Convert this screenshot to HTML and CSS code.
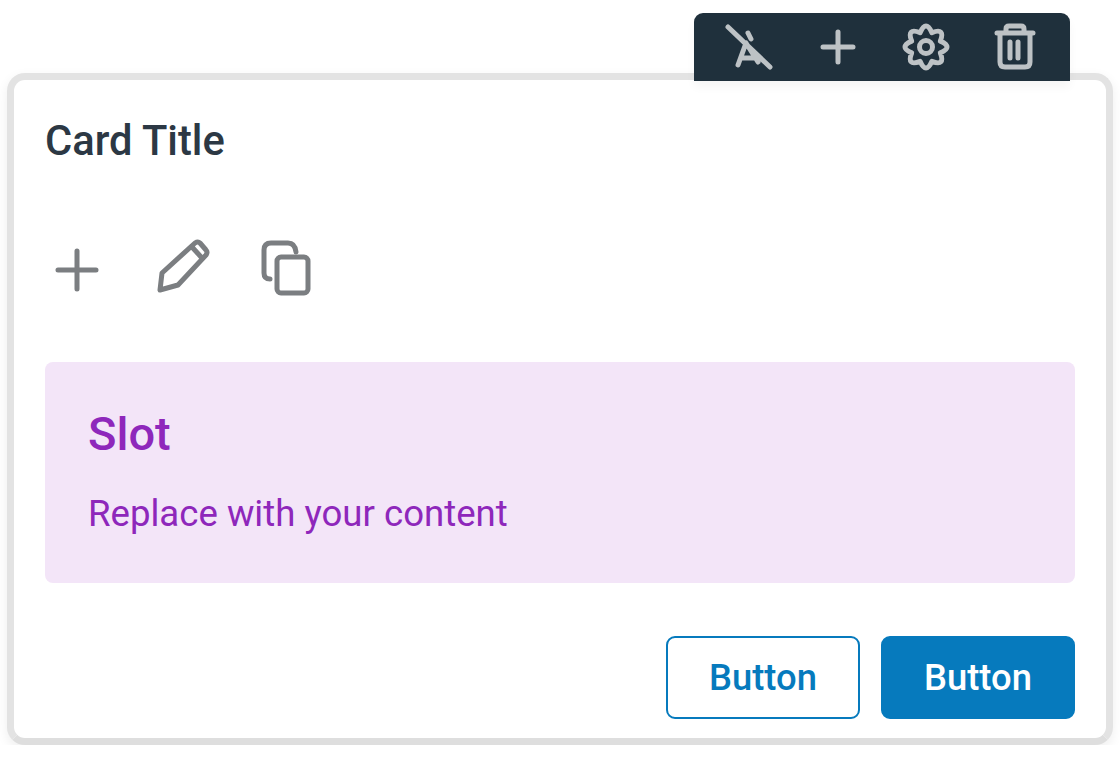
FILE: index.html
```html
<!DOCTYPE html>
<html lang="en">
<head>
  <meta charset="UTF-8">
  <title>Card</title>
  <link rel="stylesheet" href="styles.css">
</head>
<body>
  <div class="card">
    <div class="toolbar">
      <svg class="tool-icon" viewBox="0 0 48 48"><path d="M3 4 45 44M23 10l3 6M21 20 13 42M21 20l12 19M16 35h15"/></svg>
      <svg class="tool-icon" viewBox="0 0 48 48"><path d="M24 9v30M9 24h30"/></svg>
      <svg class="tool-icon" viewBox="0 0 48 48"><circle cx="24" cy="24" r="6.5"/><path d="M38.3 18.1Q51.7 24 38.3 29.9Q43.6 43.6 29.9 38.3Q24 51.7 18.1 38.3Q4.4 43.6 9.7 29.9Q-3.7 24 9.7 18.1Q4.4 4.4 18.1 9.7Q24 -3.7 29.9 9.7Q43.6 4.4 38.3 18.1z"/></svg>
      <svg class="tool-icon" viewBox="0 0 48 48"><path d="M6 10h36M15 9V6q0-3 3-3h12q3 0 3 3v3M9 11v28q0 5 5 5h20q5 0 5-5V11M19 19v16M27 19v16"/></svg>
    </div>
    <h2 class="card-title">Card Title</h2>
    <div class="card-icons">
      <svg class="card-icon" viewBox="0 0 60 60"><path d="M11 32h38M30 13v38"/></svg>
      <svg class="card-icon" viewBox="0 0 60 60"><path d="M9 52l2-17L44 5q3-2 5 0l6 7q2 2 0 5L27 47zM41 9l10 11"/></svg>
      <svg class="card-icon" viewBox="0 0 60 60"><path d="M15 41q-6 0-6-6V12q0-7 7-7h17q7 0 8 9"/><rect x="22" y="19" width="31" height="36" rx="4"/></svg>
    </div>
    <div class="slot">
      <div class="slot-title">Slot</div>
      <div class="slot-text">Replace with your content</div>
    </div>
    <div class="card-actions">
      <button class="btn btn-outline">Button</button>
      <button class="btn btn-primary">Button</button>
    </div>
  </div>
</body>
</html>
```

FILE: styles.css
```css
body {
  font-family: Roboto, "Liberation Sans", sans-serif;
  background-color: #fff;
  margin: 0;
  padding: 73px 7px 0;
}

.card {
  position: relative;
  height: 672px;
  box-sizing: border-box;
  padding: 36px 31px 0;
  background-color: #fff;
  border: 7px solid #e3e3e3;
  border-bottom-color: #dedede;
  border-radius: 18px;
  box-shadow: 0 4px 12px rgba(0, 0, 0, 0.07);
}

.toolbar {
  position: absolute;
  top: -67px;
  right: 36px;
  width: 376px;
  height: 68px;
  display: flex;
  justify-content: space-between;
  align-items: center;
  box-sizing: border-box;
  padding: 0 31px;
  background-color: #1f303c;
  border-radius: 9px 9px 0 0;
  box-shadow: 0 6px 10px rgba(0, 0, 0, 0.04);
}

.tool-icon {
  width: 48px;
  height: 48px;
  fill: none;
  stroke: #bdc2c5;
  stroke-width: 5;
  stroke-linecap: round;
  stroke-linejoin: round;
  overflow: visible;
}

.card-title {
  margin: 0;
  font-size: 41.7px;
  line-height: 50px;
  font-weight: 500;
  color: #2c3844;
}

.card-icons {
  display: flex;
  gap: 44px;
  margin-top: 72px;
  padding-left: 2px;
}

.card-icon {
  width: 60px;
  height: 60px;
  fill: none;
  stroke: #7b7e81;
  stroke-width: 5;
  stroke-linecap: round;
  stroke-linejoin: round;
}

.slot {
  margin-top: 64px;
  height: 221px;
  box-sizing: border-box;
  padding: 43px;
  background-color: #f3e5f8;
  border-radius: 8px;
  color: #8e27bb;
}

.slot-title {
  font-size: 47px;
  line-height: 58px;
  font-weight: 500;
}

.slot-text {
  margin-top: 30px;
  font-size: 36.6px;
  line-height: 42px;
}

.card-actions {
  display: flex;
  justify-content: flex-end;
  gap: 21px;
  margin-top: 53px;
}

.btn {
  width: 194px;
  height: 83px;
  font-family: inherit;
  font-size: 36.4px;
  font-weight: 500;
  border-radius: 9px;
  border: 2px solid #067abd;
}

.btn-outline {
  background-color: #fff;
  color: #067abd;
}

.btn-primary {
  background-color: #067abd;
  color: #fff;
}
```
